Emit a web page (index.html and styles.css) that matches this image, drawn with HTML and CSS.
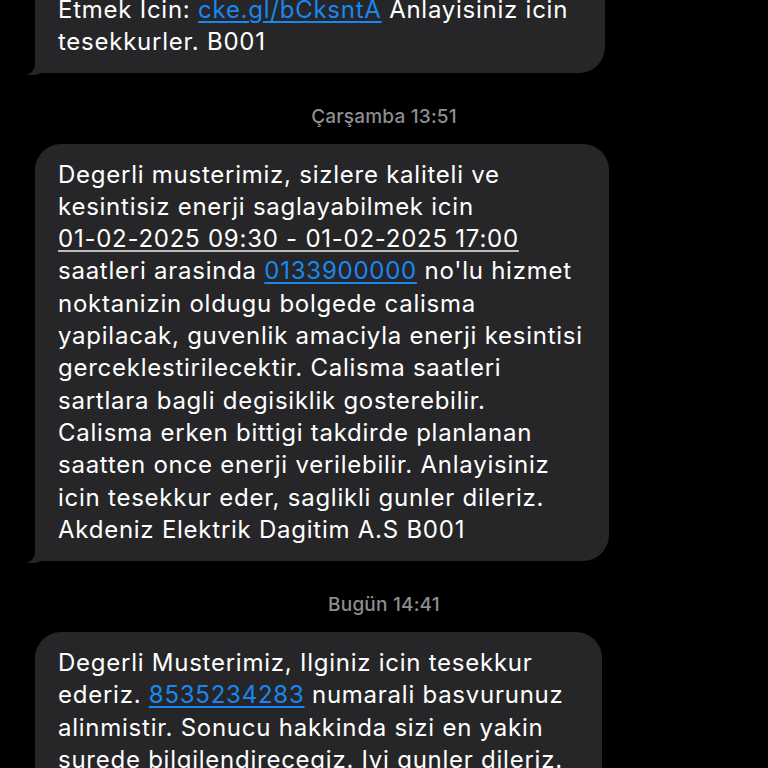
FILE: index.html
```html
<!DOCTYPE html>
<html lang="tr">
<head>
<meta charset="utf-8">
<link rel="stylesheet" href="styles.css">
</head>
<body>
<main class="thread">
  <div class="bubble bubble--clipped bubble--w1">
    <p class="msg">Etmek Icin: <a class="link">cke.gl/bCksntA</a> Anlayisiniz icin<br>tesekkurler. B001</p>
  </div>

  <div class="stamp">Çarşamba 13:51</div>

  <div class="bubble bubble--w2">
    <p class="msg">Degerli musterimiz, sizlere kaliteli ve<br>kesintisiz enerji saglayabilmek icin<br><span class="date">01-02-2025 09:30 - 01-02-2025 17:00</span><br>saatleri arasinda <a class="link">0133900000</a> no'lu hizmet<br>noktanizin oldugu bolgede calisma<br>yapilacak, guvenlik amaciyla enerji kesintisi<br>gerceklestirilecektir. Calisma saatleri<br>sartlara bagli degisiklik gosterebilir.<br>Calisma erken bittigi takdirde planlanan<br>saatten once enerji verilebilir. Anlayisiniz<br>icin tesekkur eder, saglikli gunler dileriz.<br>Akdeniz Elektrik Dagitim A.S B001</p>
  </div>

  <div class="stamp">Bugün 14:41</div>

  <div class="bubble bubble--w3">
    <p class="msg">Degerli Musterimiz, Ilginiz icin tesekkur<br>ederiz. <a class="link">8535234283</a> numarali basvurunuz<br>alinmistir. Sonucu hakkinda sizi en yakin<br>surede bilgilendirecegiz. Iyi gunler dileriz.</p>
  </div>
</main>
</body>
</html>
```

FILE: styles.css
```css
html, body {
  margin: 0;
  padding: 0;
  background: #000;
  height: 768px;
  overflow: hidden;
}

.thread {
  display: flex;
  flex-direction: column;
  align-items: flex-start;
  padding-left: 35px;
  font-family: Inter, "Noto Sans", sans-serif;
}

.bubble {
  position: relative;
  box-sizing: border-box;
  background: #262628;
  border-radius: 26px;
  border-bottom-left-radius: 6px;
  padding: 15px 22px 15px 23px;
}

.bubble::before {
  content: "";
  position: absolute;
  bottom: -2px;
  left: -8px;
  width: 22px;
  height: 22px;
  background: #262628;
  border-bottom-right-radius: 16px;
}

.bubble::after {
  content: "";
  position: absolute;
  bottom: -2px;
  left: -14px;
  width: 14px;
  height: 24px;
  background: #000;
  border-bottom-right-radius: 11px;
}

.bubble--clipped {
  margin-top: -6px;
  padding-top: 0;
  padding-bottom: 14px;
  border-top-left-radius: 0;
  border-top-right-radius: 0;
}

.bubble--w1 { width: 570px; }
.bubble--w2 { width: 574px; }
.bubble--w3 { width: 567px; }

.msg {
  margin: 0;
  color: #fff;
  font-size: 24px;
  line-height: 32.3px;
  white-space: nowrap;
  letter-spacing: 0.75px;
  position: relative;
  z-index: 1;
}

.link {
  color: #1a87f0;
  text-decoration: underline;
  text-decoration-thickness: 1.5px;
  text-underline-offset: 3px;
}

.date {
  text-decoration: underline;
  text-decoration-color: #bdbdbd;
  text-decoration-thickness: 1.5px;
  text-underline-offset: 3px;
}

.stamp {
  align-self: center;
  margin-left: -35px;
  color: #8d8d92;
  font-size: 19px;
  font-weight: 500;
  line-height: 20px;
  letter-spacing: 0.2px;
  margin-top: 34px;
  margin-bottom: 17px;
}
```
